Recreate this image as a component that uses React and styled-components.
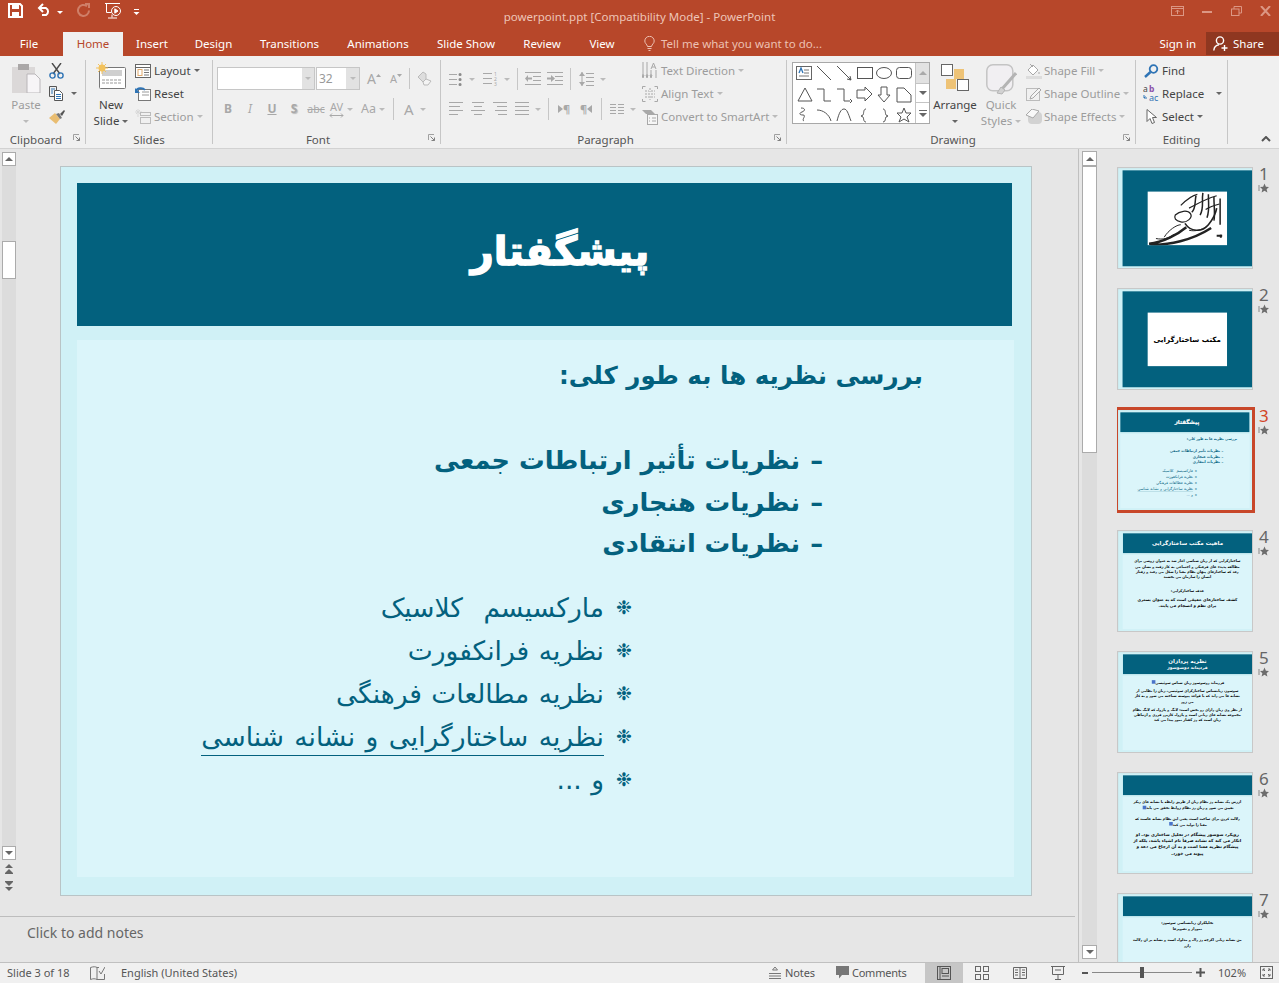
import React from "react";
import styled, { createGlobalStyle } from "styled-components";

const Global = createGlobalStyle`
  html, body { margin: 0; padding: 0; background: #e6e6e6; }
  * { box-sizing: border-box; }
  #root { width: 1279px; height: 983px; overflow: hidden; }
`;
const UI = `"Noto Sans", "Open Sans", sans-serif`;
const FA = `"DejaVu Sans", sans-serif`;
const GR = "#a8a8a8";
const DK = "#5f5f5f";

const Page = styled.div`
  width: 1279px; height: 983px; display: flex; flex-direction: column;
  font-family: ${UI}; font-size: 11.5px; color: #444; overflow: hidden;
`;
const TitleBar = styled.header`
  height: 32px; background: #b7472a; display: grid; grid-template-columns: 1fr auto 1fr; padding-bottom: 4px;
`;
const Qat = styled.div`display: flex; align-items: flex-start; padding: 3px 0 0 8px;`;
const QatItem = styled.span`display: flex; width: ${p => p.$w}px; height: 18px; align-items: ${p => p.$mid ? "center" : "flex-start"};`;
const DocTitle = styled.div`color: #eec5b8; font-size: 11.5px; line-height: 34px; height: 28px;`;
const WinCtl = styled.div`display: flex; justify-content: flex-end; padding: 6px 8px 0 0; gap: 18px;`;
const TabBar = styled.nav`
  height: 24px; background: #b7472a; display: flex; align-items: stretch;
`;
const Tab = styled.div`
  width: ${p => p.$w}px; margin-right: ${p => p.$mr || 0}px; text-align: center; line-height: 23px;
  color: ${p => p.$on ? "#b7472a" : "#fff"}; background: ${p => p.$on ? "#f0f0f0" : "transparent"};
`;
const TellMe = styled.div`display: flex; align-items: center; gap: 6px; margin-left: 15px; color: #edc1b3; padding-bottom: 1px;`;
const TabRight = styled.div`margin-left: auto; display: flex; align-items: stretch;`;
const SignIn = styled.div`color: #fff; line-height: 23px; margin-right: 10px;`;
const Share = styled.div`
  width: 73px; height: 23px; background: #8f3720; color: #fff; display: flex; align-items: center; gap: 5px; padding-left: 7px;
`;
const Ribbon = styled.section`
  height: 93px; background: #f0f0f0; border-bottom: 1px solid #d2d2d2; display: flex; padding-top: 4px; align-items: flex-start;
`;
const Group = styled.div`
  width: ${p => p.$w}px; height: 84px; border-right: 1px solid #c6c6c6; display: flex; flex-direction: column;
`;
const GroupBody = styled.div`
  height: 70px; display: flex; align-items: flex-start; padding-left: ${p => p.$pl || 0}px;
`;
const GroupLabel = styled.div`
  height: 14px; line-height: 20px; text-align: center; color: #555; position: relative; font-size: 11.5px;
  padding-right: ${p => p.$pr || 0}px;
`;
const Launcher = styled.span`position: absolute; right: 5px; top: 4px; display: flex;`;
const BigCol = styled.div`
  width: ${p => p.$w}px; display: flex; flex-direction: column; align-items: center; color: ${p => p.$off ? "#9c9c9c" : "#444"};
  margin-left: ${p => p.$ml || 0}px;
`;
const BigIcon = styled.div`height: ${p => p.$h}px; margin-top: ${p => p.$mt || 0}px; margin-bottom: ${p => p.$mb || 0}px; display: flex;`;
const BigLine = styled.div`height: 16px; line-height: 16px; display: flex; align-items: center; gap: 3px;`;
const SmallCol = styled.div`display: flex; flex-direction: column; margin-left: ${p => p.$ml || 0}px; margin-top: -1px;`;
const SmallRow = styled.div`
  height: 23px; display: flex; align-items: center; gap: ${p => p.$gap ?? 3}px; color: ${p => p.$off ? "#9c9c9c" : "#444"}; white-space: nowrap;
`;
const IconSlot = styled.span`width: ${p => p.$w}px; height: 16px; display: flex; align-items: center; justify-content: center; flex: none;`;
const Caret = styled.span`
  display: inline-block; width: 0; height: 0; flex: none; margin-left: ${p => p.$ml || 0}px;
  border-left: 3px solid transparent; border-right: 3px solid transparent;
  border-top: 3px solid ${p => p.$c || "#666"};
`;
const Stack = styled.div`display: flex; flex-direction: column;`;
const ToolRow = styled.div`
  display: flex; align-items: center; height: ${p => p.$h || 22}px; margin-top: ${p => p.$mt || 0}px; padding-left: ${p => p.$pl || 0}px;
`;
const Tool = styled.span`
  width: ${p => p.$w}px; display: flex; align-items: center; gap: ${p => p.$gap ?? 6}px; flex: none;
  justify-content: ${p => p.$center ? "center" : "flex-start"}; color: ${GR}; margin-left: ${p => p.$ml || 0}px;
`;
const Letter = styled.span`
  font-weight: ${p => p.$b ? 700 : 400}; font-style: ${p => p.$i ? "italic" : "normal"};
  text-decoration: ${p => p.$u ? "underline" : p.$s ? "line-through" : "none"};
  font-size: ${p => p.$fs || 12}px; color: ${GR}; line-height: ${p => p.$lh || 16}px;
  text-shadow: ${p => p.$sh ? "1px 1px 1px #bbb" : "none"};
`;
const KernStack = styled.span`display: flex; flex-direction: column; align-items: center; width: 15px;`;
const VSep = styled.span`
  width: 1px; height: ${p => p.$h || 22}px; background: #c6c6c6; flex: none; margin: 0 ${p => p.$mr ?? 7}px 0 ${p => p.$ml || 0}px;
`;
const InputBox = styled.span`
  width: ${p => p.$w}px; height: 23px; background: #fff; border: 1px solid #c6c6c6; border-right: 0; color: #999;
  line-height: 21px; padding-left: 2px; font-size: 12px; flex: none;
`;
const DropBox = styled.span`
  width: ${p => p.$w}px; height: 23px; background: #e2e2e2; border: 1px solid #c6c6c6; border-left: 0; display: flex;
  align-items: center; justify-content: center; margin-right: ${p => p.$mr || 0}px; flex: none;
`;
const Gallery = styled.div`
  margin-top: 2px; width: 138px; height: 62px; border: 1px solid #a8a8a8; display: flex; background: #fff;
`;
const GalleryScroll = styled.div`width: 15px; border-left: 1px solid #c4c4c4; display: flex; flex-direction: column;`;
const GalleryBtn = styled.span`
  height: ${p => p.$h}px; background: ${p => p.$off ? "#e2e2e2" : "#fff"}; border-bottom: ${p => p.$last ? 0 : 1}px solid #c4c4c4;
  display: flex; align-items: center; justify-content: center;
`;
const Collapse = styled.div`margin-left: auto; margin-top: 76px; padding-right: 8px; display: flex;`;

const Main = styled.main`height: 813px; display: flex; background: #e6e6e6;`;
const EditorCol = styled.div`width: 1079px; border-right: 1px solid #c0c0c0; display: flex; flex-direction: column;`;
const EditorTop = styled.div`height: 767px; display: flex;`;
const LeftBar = styled.div`width: 17px; padding: 3px 0 0 2px; display: flex; flex-direction: column;`;
const ScrollBtn = styled.span`
  width: ${p => p.$w}px; height: ${p => p.$h || 14}px; background: #fff; border: 1px solid #ababab; display: flex; align-items: center; justify-content: center; flex: none;
`;
const Track = styled.div`
  height: ${p => p.$h}px; width: ${p => p.$w}px; background: #dcdcdc; flex: none; padding-top: ${p => p.$pt || 0}px; display: flex; flex-direction: column;
`;
const TrackThumb = styled.div`height: ${p => p.$h}px; width: 100%; background: #fff; border: 1px solid #ababab;`;
const PagerIcon = styled.span`display: flex; justify-content: center; width: 14px; margin-top: ${p => p.$mt}px;`;
const Canvas = styled.div`flex: 1; padding: 17px 0 0 43px;`;
const Notes = styled.div`
  height: 46px; border-top: 1px solid #bdbdbd; margin-right: 3px; padding-left: 27px; font-size: 14px; color: #666; line-height: 32px;
`;
const SlideBox = styled.div`
  width: 972px; height: 730px; background: #d0f1f6; border: 1px solid #b9c4c6; padding: 16px 0 0 16px; flex: none;
  transform-origin: 0 0; transform: ${p => p.$scale ? `scale(${p.$scale})` : "none"};
  font-family: ${FA};
`;
const Banner = styled.div`
  width: ${p => p.$w || 935}px; height: ${p => p.$h || 143}px; background: #03617e; color: #fff; display: flex; flex-direction: column;
  align-items: center; justify-content: center; font-weight: 700; font-size: ${p => p.$fs || 42}px; line-height: 1.2;
`;
const MainTitle = styled.div`
  font-size: 40px; font-weight: 700; -webkit-text-stroke: 1.4px #fff; padding: 0 0 8px 31px;
`;
const SubTitle = styled.div`font-size: 32px;`;
const SlideBody = styled.div`
  width: 937px; height: 537px; margin-top: 14px; background: #dbf5fa; color: #03617e; padding-top: 15px; display: flex; flex-direction: column;
`;
const HeadLine = styled.div`
  height: 42px; line-height: 42px; padding-right: 91px; font-weight: 700; font-size: 24.5px; white-space: nowrap;
`;
const SubList = styled.div`margin-top: 43px; display: flex; flex-direction: column;`;
const SubItem = styled.div`
  height: 41.5px; line-height: 41.5px; padding-right: 191px; font-weight: 700; font-size: 25.6px; display: flex; white-space: nowrap;
`;
const Dash = styled.span`width: 23px; flex: none;`;
const BulletList = styled.div`margin-top: 21px; display: flex; flex-direction: column;`;
const BulletItem = styled.div`
  height: 43px; line-height: 43px; padding-right: 382px; font-size: 26.5px; display: flex; white-space: nowrap;
  word-spacing: ${p => p.$ws ?? 1}px;
`;
const BulletMark = styled.span`width: 28px; flex: none; font-size: 19px;`;
const Linked = styled.span`
  display: inline-block; height: 41px; border-bottom: ${p => p.$u ? "1px solid #03617e" : 0};
`;
const CenterWhite = styled.div`
  width: 575px; height: 388px; background: #fff; display: flex; align-items: center; justify-content: center; color: #000; font-size: 52px;
`;
const ThumbText = styled.div`
  padding: ${p => p.$pt ?? 12}px 70px 0; text-align: center; color: #000; font-size: ${p => p.$fs || 25}px; font-weight: 700; line-height: ${p => p.$lh || 38}px;
`;
const ThumbMark = styled.span`display: inline-block; width: 26px; height: 26px; background: #4a74c9; margin-left: 10px;`;

const ThumbPane = styled.aside`flex: 1; display: flex; overflow: hidden;`;
const RightBar = styled.div`
  width: 15px; margin-left: 3px; padding-top: 2px; display: flex; flex-direction: column; flex: none;
`;
const ThumbList = styled.div`
  margin-left: 20px; padding-top: 18px; display: flex; flex-direction: column; gap: 19px; height: 813px; overflow: hidden;
`;
const ThumbRow = styled.div`display: flex; gap: 6px; height: 102px; flex: none;`;
const ThumbFrame = styled.div`
  width: 136px; height: 102px; background: #fff; overflow: hidden; flex: none;
  border: 1px solid ${p => p.$sel ? "#c8472a" : "#c8c8c8"};
  box-shadow: ${p => p.$sel ? "0 0 0 2px #c8472a" : "none"};
`;
const ThumbSide = styled.div`display: flex; flex-direction: column; align-items: flex-start; width: 14px;`;
const ThumbNum = styled.div`font-size: 17px; line-height: 13px; color: ${p => p.$sel ? "#d24726" : "#666"};`;
const ThumbStar = styled.span`display: flex; margin-top: 3px; margin-left: -1px;`;

const StatusBar = styled.footer`
  height: 21px; background: #f0f0f0; border-top: 1px solid #c0c0c0; display: flex; align-items: center; font-size: 11px; color: #555; padding-bottom: 1px;
`;
const StatusItem = styled.span`
  margin-left: ${p => p.$ml || 0}px; display: flex; align-items: center; gap: ${p => p.$gap || 5}px; white-space: nowrap; flex: none;
  width: ${p => p.$w ? p.$w + "px" : "auto"}; letter-spacing: ${p => p.$ls || 0}px;
`;
const ViewBtn = styled.span`
  width: 38px; height: 20px; display: flex; align-items: center; justify-content: center; flex: none; background: ${p => p.$on ? "#c6c6c6" : "transparent"};
`;
const ZoomTrack = styled.span`
  width: 100px; height: 1px; background: #888; margin: 0 4px; flex: none; display: flex; justify-content: center; align-items: center;
`;
const ZoomKnob = styled.span`width: 4px; height: 11px; background: #555; flex: none;`;

const S = ({ w, h, vb, children, fill = "none", stroke = "none", sw = 1 }) => (
  <svg width={w} height={h} viewBox={vb || `0 0 ${w} ${h}`} fill={fill} stroke={stroke} strokeWidth={sw} style={{ display: "block", flex: "none" }}>{children}</svg>
);

const Star = () => (
  <S w={11} h={11}><path d="M6.5 .5l1.4 3.3 3.1.2-2.4 2.2.8 3.3-2.9-1.8-2.9 1.8.8-3.3L2 4l3.1-.2z" fill="#6d6d6d" /><path d="M0 3h2M0 5h2M0 7h2" stroke="#888" /></S>
);

const Save = () => (
  <S w={15} h={15}><path d="M1 1h11l2 2v11H1z" stroke="#fff" strokeWidth="2" /><rect x="4" y="1" width="7" height="5" fill="#fff" /><rect x="4" y="9" width="7" height="5" fill="#fff" /></S>
);
const Undo = () => (
  <S w={14} h={13} stroke="#fff" sw={2}><path d="M3 5h6a4 4 0 0 1 0 7H5" /><path d="M6 1L2 5l4 4" /></S>
);
const Redo = () => (
  <S w={14} h={14} stroke="#cf7f68" sw={2}><path d="M10 3.2a5.5 5.5 0 1 0 2 4.3" /><path d="M8 1h4v4" /></S>
);
const Present = () => (
  <S w={17} h={16} stroke="#fff" sw={1}><path d="M0 .5h15M1.5 .5v9h5" /><circle cx="11" cy="8" r="4.5" /><path d="M9.8 5.8l3.2 2.2-3.2 2.2z" fill="#fff" /><path d="M7 11.5v3M3 15h9" /></S>
);
const Customize = () => (
  <S w={7} h={7}><path d="M1 .5h5" stroke="#fff" /><path d="M.5 3h6l-3 3z" fill="#fff" /></S>
);
const RibbonOpts = () => (
  <S w={13} h={10} stroke="#dc9784"><rect x=".5" y=".5" width="12" height="9" /><path d="M.5 2.5h12" /><path d="M6.5 8V4M4.5 6l2-2 2 2" /></S>
);
const Minimize = () => <S w={11} h={10}><rect y="5" width="10" height="2" fill="#dc9784" /></S>;
const Restore = () => (
  <S w={11} h={10} stroke="#dc9784"><rect x=".5" y="3" width="7.5" height="6.5" /><path d="M3 3V.5h7.5V7H8" /></S>
);
const Close = () => <S w={11} h={10} stroke="#dc9784" sw={2}><path d="M1 0l9 10M10 0L1 10" /></S>;
const Bulb = () => (
  <S w={11} h={15} stroke="#edc1b3"><path d="M3.5 10.5C3 8 .8 7.5.8 5a4.7 4.7 0 0 1 9.4 0c0 2.5-2.2 3-2.7 5.5z" /><path d="M3.5 12.5h4M4.5 14.5h2" /></S>
);
const UserAdd = () => (
  <S w={15} h={15} stroke="#fff" sw={1.4}><circle cx="7" cy="4.5" r="3.6" /><path d="M.8 14.5c.3-3.3 2.6-5.5 5.2-5.8M11.5 9v6M8.5 12h6" /></S>
);
const Paste = () => (
  <S w={30} h={30}><rect x="1" y="4" width="23" height="26" fill="#dbd8d8" /><rect x="7" y="1" width="11" height="6" fill="#aaa7a7" /><path d="M16 11h8l5 5v14H16z" fill="#f7f5f7" stroke="#b9b6b9" /></S>
);
const Cut = () => (
  <S w={15} h={16}><path d="M3 0l8 11M12 0L4 11" stroke="#4a4a4a" strokeWidth="1.4" /><circle cx="3.5" cy="12.5" r="2.6" stroke="#2f74b5" strokeWidth="1.4" /><circle cx="11.5" cy="12.5" r="2.6" stroke="#2f74b5" strokeWidth="1.4" /></S>
);
const Copy = () => (
  <S w={15} h={15} stroke="#555"><path d="M.5.5h7v10h-7z" /><path d="M5.5 4.5h5l3 3v7h-8z" fill="#fff" /><path d="M7 8.5h5M7 10.5h5M7 12.5h5M2 3h4M2 5h2M2 7h2" stroke="#2f74b5" /></S>
);
const Painter = () => (
  <S w={16} h={14}><path d="M0 8l6-5 5 6-4 5z" fill="#e9bd71" /><path d="M7 4l4 5 2-1-3-5z" fill="#777" /><path d="M11 4l4-4 1 1-3 5z" fill="#555" /></S>
);
const NewSlide = () => (
  <S w={30} h={28}><rect x="3.5" y="5.5" width="26" height="21" rx="1" fill="#fff" stroke="#777" /><rect x="6" y="8" width="20" height="6" fill="#cfcfcf" /><path d="M6 18h20M6 21h20" stroke="#999" strokeDasharray="3 1" /><circle cx="6" cy="6" r="3.5" fill="#f3c25c" /><path d="M6 0v12M0 6h12M2 2l8 8M10 2l-8 8" stroke="#f3c25c" /></S>
);
const Layout = () => (
  <S w={16} h={14} stroke="#666"><rect x=".5" y=".5" width="15" height="13" fill="#fff" /><path d="M.5 3.5h15" /><rect x="3" y="5.5" width="4" height="6" stroke="#e0a96d" /><path d="M9 6h5M9 8.5h5M9 11h5" stroke="#777" /></S>
);
const Reset = () => (
  <S w={16} h={15}><rect x="3.5" y="3.5" width="12" height="11" fill="#fff" stroke="#777" /><path d="M7 6h7M7 9h7" stroke="#999" /><path d="M1 5a5 4 0 0 1 9-1" stroke="#2f74b5" strokeWidth="2" /><path d="M0 2v5h5z" fill="#2f74b5" /></S>
);
const Section = () => (
  <S w={16} h={15}><path d="M3 0v8M0 3h7M1 1l4 4M5 1L1 5" stroke="#d8d8d8" /><rect x="5.5" y="3.5" width="10" height="3" stroke="#bbb" /><rect x="5.5" y="8.5" width="10" height="6" stroke="#bbb" /></S>
);
const TriUp = () => <S w={5} h={10}><path d="M0 3h5L2.5 0z" fill={GR} /></S>;
const TriDown = () => <S w={5} h={10}><path d="M0 0h5L2.5 3z" fill={GR} /></S>;
const Eraser = () => (
  <S w={15} h={15}><path d="M1 6l5-5 3 2v5l-3 3z" fill="#ddd" stroke="#bbb" /><path d="M6 11l3-3 5 2-3 4H7z" fill="#f4f4f4" stroke="#bbb" /></S>
);
const KernArrow = () => <S w={15} h={5}><path d="M1 2.5h13M3 .5l-2 2 2 2M12 .5l2 2-2 2" stroke={GR} /></S>;
const Lines = ({ rows = 4, w = 14, dx = [], gap = 4, c = GR }) => (
  <S w={w} h={(rows - 1) * gap + 2} stroke={c}>{Array.from({ length: rows }).map((_, i) => <path key={i} d={`M${dx[i] || 0} ${i * gap + .5}H${w - ((dx[i + rows] || 0))}`} />)}</S>
);
const Bullets = () => (
  <S w={14} h={15}><path d="M0 2.5h8M0 7.5h8M0 12.5h8" stroke={GR} /><path d="M11 2.5h.1M11 7.5h.1M11 12.5h.1" stroke={DK} strokeWidth="3" strokeLinecap="round" opacity=".7" /></S>
);
const Numbers = () => (
  <S w={15} h={19}><path d="M0 3.5h9M0 8.5h9M0 13.5h9" stroke={GR} /><text x="11" y="6" fontSize="5" fontFamily="Noto Sans" fill={GR}>1</text><text x="11" y="11" fontSize="5" fontFamily="Noto Sans" fill={GR}>2</text><text x="11" y="16" fontSize="5" fontFamily="Noto Sans" fill={GR}>3</text></S>
);
const Indent = ({ inc }) => (
  <S w={16} h={14}><path d="M0 .5h16M8 4.5h8M8 8.5h8M0 12.5h16" stroke={GR} /><path d={inc ? "M0 6.5h4" : "M2 6.5h5"} stroke={GR} strokeWidth="2" /><path d={inc ? "M4 3l4 3.5-4 3.5z" : "M3 3L0 6.5 3 10z"} fill={GR} /></S>
);
const LineSpacing = () => (
  <S w={15} h={16}><path d="M7 2.5h8M7 6.5h8M7 10.5h8M7 14.5h8" stroke={GR} /><path d="M3 1v14" stroke={GR} /><path d="M0 5l3-4 3 4zM0 11l3 4 3-4z" fill={GR} /></S>
);
const ParaMark = styled.span`display: flex; align-items: center; gap: 0; font-weight: 700; font-size: 11px; line-height: 14px; color: ${GR};`;
const Para = ({ rev }) => (
  <ParaMark>
    {!rev && <S w={5} h={10}><path d="M0 1l5 4-5 4z" fill={GR} /></S>}
    ¶
    {rev && <S w={5} h={10}><path d="M5 1L0 5l5 4z" fill={GR} /></S>}
  </ParaMark>
);
const Columns = () => (
  <S w={14} h={11} stroke={GR}><path d="M0 .5h6M8 .5h6M0 3.5h6M8 3.5h6M0 6.5h6M8 6.5h6M0 9.5h6M8 9.5h6" /></S>
);
const TextDir = () => (
  <S w={16} h={17} stroke={GR}><path d="M1 0v14M5 0v14M9 8v6" /><path d="M0 13l1 3 1-3zM4 13l1 3 1-3zM8 13l1 3 1-3zM14 8l0 8" /><path d="M9 7l2.5-6L14 7M10 5h3" /></S>
);
const AlignText = () => (
  <S w={16} h={16} stroke={GR}><path d="M.5 3V.5h3M12.5.5h3V3M.5 13v2.5h3M12.5 15.5h3V13" /><path d="M3 5h4M9 5h4M3 8h10M3 11h4M9 11h4M8 2v4M8 10v4" strokeDasharray="2 1" /></S>
);
const Smart = () => (
  <S w={16} h={16}><path d="M0 1h9l4 4H4z" fill={GR} /><rect x="5.5" y="5.5" width="10" height="10" fill="#f6f6f6" stroke={GR} /><path d="M7 9h1M10 9h4M7 12h1M10 12h4" stroke={GR} /></S>
);
const Arrange = () => (
  <S w={28} h={27}><rect x="13" y="5" width="10" height="10" fill="#eec377" /><rect x="5" y="15" width="10" height="10" fill="#eec377" /><rect x=".5" y=".5" width="11" height="11" fill="#fff" stroke="#666" /><rect x="16.5" y="15.5" width="11" height="11" fill="#fff" stroke="#666" /></S>
);
const Quick = () => (
  <S w={31} h={31}><rect x=".8" y=".8" width="26" height="26" rx="6" fill="#f1eff2" stroke="#c4c4c4" strokeWidth="1.5" /><path d="M30 9L16 25" stroke="#b4b4b4" strokeWidth="3" /><path d="M15 23l4 3-3 4-5-1z" fill="#d2d2d2" stroke="#b4b4b4" /></S>
);
const ShapeFill = () => (
  <S w={16} h={16}><path d="M2 7l5-5 5 5-5 5z" fill="#fff" stroke={GR} /><path d="M4 1l3 3M13 9v2" stroke={GR} /><rect y="13" width="16" height="3" fill="#ddd" /></S>
);
const ShapeOutline = () => (
  <S w={16} h={15}><rect x=".5" y="2.5" width="13" height="12" stroke="#bbb" /><path d="M5 10l8-8 2 2-8 8-3 1z" fill="#f4f4f4" stroke={GR} /></S>
);
const ShapeEffects = () => (
  <S w={16} h={15}><rect x="2" y="3" width="14" height="12" rx="4" fill="#d2d2d2" /><path d="M0 6L6 0l7 2-6 7z" fill="#f8f8f8" stroke={GR} /></S>
);
const Find = () => (
  <S w={15} h={14}><circle cx="9.5" cy="5" r="3.8" stroke="#2f74b5" strokeWidth="1.8" /><path d="M6.5 8L1 13" stroke="#2f74b5" strokeWidth="2.4" /></S>
);
const Replace = () => (
  <S w={17} h={21}><text x="0" y="9" fontFamily="Noto Sans" fontSize="8.5" fill="#444">a</text><text x="6" y="9" fontFamily="Noto Sans" fontWeight="700" fontSize="8.5" fill="#8a4ea8">b</text><text x="6" y="17.5" fontFamily="Noto Sans" fontSize="9" fill="#2f74b5">ac</text><path d="M1 12v3h3M2.5 13.5L1 15" stroke="#2f74b5" /></S>
);
const Pointer = () => (
  <S w={11} h={16}><path d="M1 .5v12l3-3 2 5 2.5-1-2-5h4z" fill="#fff" stroke="#666" /></S>
);
const LauncherIcon = () => (
  <S w={7} h={7}><path d="M.5 6V.5H6" stroke="#a0a0a0" /><path d="M2.5 2.5l4 4M6.5 3.5v3h-3" stroke="#808080" /></S>
);
const Chevron = () => <S w={10} h={6} stroke="#555" sw={2}><path d="M1 5l4-4 4 4" /></S>;
const Up = ({ c = "#666" }) => <S w={8} h={4}><path d="M0 4h8L4 0z" fill={c} /></S>;
const Down = ({ c = "#666" }) => <S w={8} h={4}><path d="M0 0h8L4 4z" fill={c} /></S>;
const PrevSlide = () => <S w={8} h={10}><path d="M4 0l4 4H0zM4 5l4 4H0z" fill="#666" /><path d="M0 9.5h8" stroke="#666" /></S>;
const NextSlide = () => <S w={8} h={10}><path d="M0 .5h8" stroke="#666" /><path d="M4 5L0 1h8zM4 10L0 6h8z" fill="#666" /></S>;

const GalleryShapes = () => (
  <S w={122} h={60} stroke="#555">
    <rect x="3.5" y="3.5" width="15" height="13" fill="#fff" stroke="#666" />
    <path d="M6 10l2-5 2 5" stroke="#2f74b5" strokeWidth="1.3" />
    <path d="M11 7h5M11 10h5M6 13h10" stroke="#777" />
    <path d="M24 3l14 14M44 3l14 14M58 17l-4-1M58 17l-1-4" />
    <rect x="64.5" y="4.5" width="15" height="11" />
    <ellipse cx="91" cy="10" rx="7.5" ry="5.5" />
    <rect x="103.5" y="4.5" width="15" height="11" rx="3" />
    <path d="M5 38l7-13 7 13zM24 26h7v12h7M44 26h7v12h6M57 36l2 2-2 2" />
    <path d="M64 27h8v-3l7 7-7 7v-3h-8z" />
    <path d="M88 24h6v8h3l-6 7-6-7h3z" />
    <path d="M104 25h7l7 7v7h-14z" />
    <path d="M8 45c5 0 4 3 1 4s-3 3 1 3-2 5 1 6" />
    <path d="M24 47c6 0 12 4 14 11M44 58c2-8 4-12 7-12s4 4 7 12" />
    <path d="M73 46c-3 0-2 5-3 6l-2 1 2 1c1 1 0 5 3 5M90 46c3 0 2 5 3 6l2 1-2 1c-1 1 0 5-3 5" />
    <path d="M111 45l2 5h5l-4 4 2 5-5-3-5 3 2-5-4-4h5z" />
  </S>
);

const Calligraphy = () => (
  <svg width="575" height="388" viewBox="0 0 575 388" fill="none" stroke="#222">
    <path d="M10 378c100 -8 210 -70 270 -120M20 384c130 6 300 -30 440 -120" strokeWidth="18" />
    <path d="M270 230c40 60 120 70 170 10s60 -120 60 -120" strokeWidth="12" />
    <path d="M525 50v190M480 40c0 60 10 130 0 170M440 20c0 80 10 110 -10 170M400 10c-10 60 10 110 -20 160M350 30c-10 50 0 90 -30 120" strokeWidth="11" />
    <path d="M200 170c30-30 90-40 110-10s-30 70-70 60-50-30-40-50zM240 100c30-30 70-70 120-80M300 120c40-20 100-60 200-90M420 130c30-20 60-30 100-40" strokeWidth="9" />
    <path d="M500 320h40M530 310v24" strokeWidth="14" />
    <path d="M120 330c30 -50 90 -90 120 -90M60 340c50 10 90 0 130 -30M300 280c40 10 90 0 130 -30" strokeWidth="7" />
  </svg>
);

const Bell = () => (
  <S w={12} h={12} stroke="#777"><path d="M6 0l2.5 3h-5zM0 6.5h12M0 9h12M0 11.5h12" /></S>
);
const Comment = () => (
  <S w={13} h={13}><path d="M0 0h13v9H6l-3 3.5V9H0z" fill="#777" /></S>
);
const Book = () => (
  <S w={15} h={14} stroke="#777"><path d="M.5 1.5c3-1 5-1 6.5 0v12c-2-1-4-1-6.5 0zM7 1.5h2M7 13.5h7.5V8M9 5l2 3 4-7" /></S>
);
const ViewNormal = () => (
  <S w={14} h={14} stroke="#555"><rect x=".5" y=".5" width="13" height="13" /><rect x="5" y="2.5" width="6.5" height="5" /><path d="M3 1v12M5 10h7" /></S>
);
const ViewSorter = () => (
  <S w={14} h={14} stroke="#666"><rect x=".5" y=".5" width="5" height="5" /><rect x="8.5" y=".5" width="5" height="5" /><rect x=".5" y="8.5" width="5" height="5" /><rect x="8.5" y="8.5" width="5" height="5" /></S>
);
const ViewReading = () => (
  <S w={14} h={14} stroke="#666"><path d="M.5 1.5h13v11h-13zM7 1.5v11M2 4h3M2 6.5h3M2 9h3M9 4h3M9 6.5h3M9 9h3" /></S>
);
const ViewShow = () => (
  <S w={14} h={14} stroke="#666"><path d="M0 .5h14M1.5 .5v8h11v-8M7 8.5v5M4 13.5h6M4 4h6" /></S>
);
const Fit = () => (
  <S w={13} h={13} stroke="#666"><rect x=".5" y=".5" width="12" height="12" /><path d="M3 3l2 2M3 3v2M3 3h2M10 3L8 5M10 3v2M10 3H8M3 10l2-2M3 10V8M3 10h2M10 10L8 8M10 10V8M10 10H8" /></S>
);
const GalleryMore = () => <S w={8} h={7}><path d="M0 .5h8" stroke="#666" /><path d="M0 3h8L4 7z" fill="#666" /></S>;

const Slide3 = ({ scale }) => (
  <SlideBox $scale={scale} dir="ltr">
    <Banner><MainTitle>پیشگفتار</MainTitle></Banner>
    <SlideBody dir="rtl">
      <HeadLine>بررسی نظریه ها به طور کلی:</HeadLine>
      <SubList>
        <SubItem><Dash>–</Dash>نظریات تأثیر ارتباطات جمعی</SubItem>
        <SubItem><Dash>–</Dash>نظریات هنجاری</SubItem>
        <SubItem><Dash>–</Dash>نظریات انتقادی</SubItem>
      </SubList>
      <BulletList>
        <BulletItem $ws={12}><BulletMark>❉</BulletMark><span>مارکسیسم کلاسیک</span></BulletItem>
        <BulletItem><BulletMark>❉</BulletMark><span>نظریه فرانکفورت</span></BulletItem>
        <BulletItem><BulletMark>❉</BulletMark><span>نظریه مطالعات فرهنگی</span></BulletItem>
        <BulletItem $ws={2}><BulletMark>❉</BulletMark><Linked $u>نظریه ساختارگرایی و نشانه شناسی</Linked></BulletItem>
        <BulletItem><BulletMark>❉</BulletMark><span>و ...</span></BulletItem>
      </BulletList>
    </SlideBody>
  </SlideBox>
);

const SCALE = 0.138;
const thumbs = [
  <SlideBox $scale={SCALE} key="1" dir="rtl"><Banner $w={938} $h={695}><CenterWhite><Calligraphy /></CenterWhite></Banner></SlideBox>,
  <SlideBox $scale={SCALE} key="2" dir="rtl"><Banner $w={938} $h={695}><CenterWhite>مکتب ساختارگرایی</CenterWhite></Banner></SlideBox>,
  <Slide3 key="3" scale={SCALE} />,
  <SlideBox $scale={SCALE} key="4" dir="rtl">
    <Banner $fs={40}>ماهیت مکتب ساختارگرایی</Banner>
    <SlideBody>
      <ThumbText>ساختارگرایی که از زبان شناسی آغاز شد به عنوان روشی برای مطالعه پدیده های فرهنگی و اجتماعی به کار رفت و نشان می دهد که ساختارهای پنهان نظام معنا را شکل می دهند و رفتار انسان را سازمان می بخشند</ThumbText>
      <ThumbText $pt={62}>هدف ساختارگرایی:</ThumbText>
      <ThumbText $pt={20} $lh={44} $fs={29}>کشف ساختارهای عمیقی است که به عنوان بستری برای نظم و انسجام می یابند.</ThumbText>
    </SlideBody>
  </SlideBox>,
  <SlideBox $scale={SCALE} key="5" dir="rtl">
    <Banner $fs={40}>نظریه پردازان<SubTitle>فردیناند دوسوسور</SubTitle></Banner>
    <SlideBody>
      <ThumbText $pt={14}>فردیناند دوسوسور زبان شناس سوئیسی<ThumbMark /></ThumbText>
      <ThumbText $pt={22}>سوسور، زبانشناس ساختارگرای سوئیسی، زبان را نظامی از نشانه ها می داند که با قواعد پیوسته شناخته می شود و به کار می رود</ThumbText>
      <ThumbText $pt={22}>از نظر وی زبان دارای دو بخش است: لانگ و پارول که لانگ نظام مجموعه نشانه های زبانی است و پارول کاربرد فردی و ارتباطی زبان است که در گفتار نمود پیدا می کند</ThumbText>
    </SlideBody>
  </SlideBox>,
  <SlideBox $scale={SCALE} key="6" dir="rtl">
    <Banner> </Banner>
    <SlideBody>
      <ThumbText $pt={0} $lh={44}>ارزش یک نشانه در نظام زبان از طریق رابطه با نشانه های دیگر تعیین می شود و زبان در نظام روابط تحقق می یابد<ThumbMark /></ThumbText>
      <ThumbText $pt={30} $lh={44}>دلالت کردن برای ساخت است، یعنی این نظام نشانه هاست که معنا را تولید می کند<ThumbMark /></ThumbText>
      <ThumbText $pt={26} $fs={31} $lh={46}>رویکرد سوسور پیشگام در تحلیل ساختاری بود. او انکار می کند که نشانه صرفاً نام اشیاء باشد، بلکه از پیشگام نظریه معنا است و به آن ارجاع می دهد و پیوند می خورد.</ThumbText>
    </SlideBody>
  </SlideBox>,
  <SlideBox $scale={SCALE} key="7" dir="rtl">
    <Banner> </Banner>
    <SlideBody>
      <ThumbText $pt={0} $lh={44}>تحلیلگران زبانشناسی سوسور:</ThumbText>
      <ThumbText $pt={0} $lh={44}>نمودار و تصویرها</ThumbText>
      <ThumbText $pt={34} $lh={44}>من نشانه زبانی اگرچه در دال و مدلول است و نشانه بر آن دلالت دارد</ThumbText>
    </SlideBody>
  </SlideBox>,
];

export default function App() {
  return (
    <Page>
      <Global />
      <TitleBar>
        <Qat>
          <QatItem $w={29}><Save /></QatItem>
          <QatItem $w={20}><Undo /></QatItem>
          <QatItem $w={20} $mid><Caret $c="#fff" /></QatItem>
          <QatItem $w={28}><Redo /></QatItem>
          <QatItem $w={28}><Present /></QatItem>
          <QatItem $w={10} $mid><Customize /></QatItem>
        </Qat>
        <DocTitle>powerpoint.ppt [Compatibility Mode] - PowerPoint</DocTitle>
        <WinCtl><RibbonOpts /><Minimize /><Restore /><Close /></WinCtl>
      </TitleBar>
      <TabBar>
        <Tab $w={58} $mr={5}>File</Tab>
        <Tab $w={60} $on>Home</Tab>
        <Tab $w={58}>Insert</Tab>
        <Tab $w={65}>Design</Tab>
        <Tab $w={87}>Transitions</Tab>
        <Tab $w={90}>Animations</Tab>
        <Tab $w={86}>Slide Show</Tab>
        <Tab $w={66}>Review</Tab>
        <Tab $w={54}>View</Tab>
        <TellMe><Bulb />Tell me what you want to do...</TellMe>
        <TabRight>
          <SignIn>Sign in</SignIn>
          <Share><UserAdd />Share</Share>
        </TabRight>
      </TabBar>
      <Ribbon>
        <Group $w={86}>
          <GroupBody $pl={10}>
            <BigCol $w={32} $off>
              <BigIcon $h={30} $mt={3} $mb={4}><Paste /></BigIcon>
              <BigLine>Paste</BigLine>
              <BigLine><Caret $c="#bbb" /></BigLine>
            </BigCol>
            <SmallCol $ml={7}>
              <SmallRow><Cut /></SmallRow>
              <SmallRow $gap={5}><Copy /><IconSlot $w={10}><Caret /></IconSlot></SmallRow>
              <SmallRow><Painter /></SmallRow>
            </SmallCol>
          </GroupBody>
          <GroupLabel $pr={13}>Clipboard<Launcher><LauncherIcon /></Launcher></GroupLabel>
        </Group>
        <Group $w={127}>
          <GroupBody $pl={9}>
            <BigCol $w={32}>
              <BigIcon $h={28} $mt={2} $mb={7}><NewSlide /></BigIcon>
              <BigLine>New</BigLine>
              <BigLine>Slide<Caret /></BigLine>
            </BigCol>
            <SmallCol $ml={8}>
              <SmallRow><IconSlot $w={16}><Layout /></IconSlot>Layout<Caret /></SmallRow>
              <SmallRow><IconSlot $w={16}><Reset /></IconSlot>Reset</SmallRow>
              <SmallRow $off><IconSlot $w={16}><Section /></IconSlot>Section<Caret $c="#bbb" /></SmallRow>
            </SmallCol>
          </GroupBody>
          <GroupLabel>Slides</GroupLabel>
        </Group>
        <Group $w={228}>
          <GroupBody $pl={4}>
            <Stack>
              <ToolRow $h={23} $mt={7}>
                <InputBox $w={85} />
                <DropBox $w={13} $mr={1}><Caret $c="#bbb" /></DropBox>
                <InputBox $w={30}>32</InputBox>
                <DropBox $w={14} $mr={7}><Caret $c="#bbb" /></DropBox>
                <Tool $w={23} $gap={0}><Letter $fs={14}>A</Letter><TriUp /></Tool>
                <Tool $w={19} $gap={0}><Letter $fs={11}>A</Letter><TriDown /></Tool>
                <VSep $h={21} />
                <Tool $w={15}><Eraser /></Tool>
              </ToolRow>
              <ToolRow $mt={8}>
                <Tool $w={22} $center><Letter $b>B</Letter></Tool>
                <Tool $w={22} $center><Letter $i>I</Letter></Tool>
                <Tool $w={22} $center><Letter $u $b>U</Letter></Tool>
                <Tool $w={22} $center><Letter $b $sh>S</Letter></Tool>
                <Tool $w={22} $center><Letter $s $fs={10.5}>abc</Letter></Tool>
                <Tool $w={32} $gap={3} $ml={2}><KernStack><Letter $fs={11} $lh={12}>AV</Letter><KernArrow /></KernStack><Caret $c="#bbb" /></Tool>
                <Tool $w={29} $gap={3}><Letter $fs={12.5}>Aa</Letter><Caret $c="#bbb" /></Tool>
                <VSep $h={22} $ml={3} $mr={10} />
                <Tool $w={30} $gap={6}><Letter $fs={15}>A</Letter><Caret $c="#bbb" /></Tool>
              </ToolRow>
            </Stack>
          </GroupBody>
          <GroupLabel $pr={17}>Font<Launcher><LauncherIcon /></Launcher></GroupLabel>
        </Group>
        <Group $w={346}>
          <GroupBody $pl={8}>
            <Stack>
              <ToolRow $h={22} $mt={8}>
                <Tool $w={34}><Bullets /><Caret $c="#bbb" /></Tool>
                <Tool $w={34}><Numbers /><Caret $c="#bbb" /></Tool>
                <VSep />
                <Tool $w={22}><Indent /></Tool>
                <Tool $w={23}><Indent inc /></Tool>
                <VSep $mr={8} />
                <Tool $w={30}><LineSpacing /><Caret $c="#bbb" /></Tool>
              </ToolRow>
              <ToolRow $mt={8}>
                <Tool $w={22}><Lines w={14} dx={[0, 0, 0, 0, 0, 3, 0, 5]} gap={4} /></Tool>
                <Tool $w={22}><Lines w={14} dx={[1, 3, 0, 3, 1, 3, 0, 3]} gap={4} /></Tool>
                <Tool $w={22}><Lines w={14} dx={[0, 4, 2, 5]} gap={4} /></Tool>
                <Tool $w={33}><Lines w={14} gap={4} /><Caret $c="#bbb" /></Tool>
                <VSep $mr={9} />
                <Tool $w={22}><Para /></Tool>
                <Tool $w={21}><Para rev /></Tool>
                <VSep $mr={8} />
                <Tool $w={30}><Columns /><Caret $c="#bbb" /></Tool>
              </ToolRow>
            </Stack>
            <SmallCol $ml={2}>
              <SmallRow $off $gap={3}><IconSlot $w={16}><TextDir /></IconSlot>Text Direction<Caret $c="#bbb" /></SmallRow>
              <SmallRow $off $gap={3}><IconSlot $w={16}><AlignText /></IconSlot>Align Text<Caret $c="#bbb" /></SmallRow>
              <SmallRow $off $gap={3}><IconSlot $w={16}><Smart /></IconSlot>Convert to SmartArt<Caret $c="#bbb" /></SmallRow>
            </SmallCol>
          </GroupBody>
          <GroupLabel $pr={16}>Paragraph<Launcher><LauncherIcon /></Launcher></GroupLabel>
        </Group>
        <Group $w={349}>
          <GroupBody $pl={5}>
            <Gallery>
              <GalleryShapes />
              <GalleryScroll>
                <GalleryBtn $h={21} $off><Up c="#aaa" /></GalleryBtn>
                <GalleryBtn $h={19}><Down /></GalleryBtn>
                <GalleryBtn $h={20} $last><GalleryMore /></GalleryBtn>
              </GalleryScroll>
            </Gallery>
            <BigCol $w={44} $ml={3}>
              <BigIcon $h={27} $mt={4} $mb={6}><Arrange /></BigIcon>
              <BigLine>Arrange</BigLine>
              <BigLine><Caret /></BigLine>
            </BigCol>
            <BigCol $w={46} $off $ml={1}>
              <BigIcon $h={31} $mt={4} $mb={2}><Quick /></BigIcon>
              <BigLine>Quick</BigLine>
              <BigLine>Styles<Caret $c="#bbb" /></BigLine>
            </BigCol>
            <SmallCol $ml={2}>
              <SmallRow $off><IconSlot $w={15}><ShapeFill /></IconSlot>Shape Fill<Caret $c="#bbb" /></SmallRow>
              <SmallRow $off><IconSlot $w={15}><ShapeOutline /></IconSlot>Shape Outline<Caret $c="#bbb" /></SmallRow>
              <SmallRow $off><IconSlot $w={15}><ShapeEffects /></IconSlot>Shape Effects<Caret $c="#bbb" /></SmallRow>
            </SmallCol>
          </GroupBody>
          <GroupLabel $pr={16}>Drawing<Launcher><LauncherIcon /></Launcher></GroupLabel>
        </Group>
        <Group $w={92}>
          <GroupBody $pl={7}>
            <SmallCol>
              <SmallRow><IconSlot $w={16}><Find /></IconSlot>Find</SmallRow>
              <SmallRow><IconSlot $w={16}><Replace /></IconSlot>Replace<Caret $ml={9} /></SmallRow>
              <SmallRow><IconSlot $w={16}><Pointer /></IconSlot>Select<Caret /></SmallRow>
            </SmallCol>
          </GroupBody>
          <GroupLabel>Editing</GroupLabel>
        </Group>
        <Collapse><Chevron /></Collapse>
      </Ribbon>
      <Main>
        <EditorCol>
          <EditorTop>
            <LeftBar>
              <ScrollBtn $w={14}><Up /></ScrollBtn>
              <Track $h={680} $w={14} $pt={75}><TrackThumb $h={38} /></Track>
              <ScrollBtn $w={14}><Down /></ScrollBtn>
              <PagerIcon $mt={4}><PrevSlide /></PagerIcon>
              <PagerIcon $mt={7}><NextSlide /></PagerIcon>
            </LeftBar>
            <Canvas><Slide3 /></Canvas>
          </EditorTop>
          <Notes>Click to add notes</Notes>
        </EditorCol>
        <ThumbPane>
          <RightBar>
            <ScrollBtn $w={15} $h={15}><Up /></ScrollBtn>
            <Track $h={779} $w={15}><TrackThumb $h={287} /></Track>
            <ScrollBtn $w={15} $h={14}><Down /></ScrollBtn>
          </RightBar>
          <ThumbList>
            {thumbs.map((t, i) => (
              <ThumbRow key={i}>
                <ThumbFrame $sel={i === 2}>{t}</ThumbFrame>
                <ThumbSide>
                  <ThumbNum $sel={i === 2}>{i + 1}</ThumbNum>
                  <ThumbStar><Star /></ThumbStar>
                </ThumbSide>
              </ThumbRow>
            ))}
          </ThumbList>
        </ThumbPane>
      </Main>
      <StatusBar>
        <StatusItem $ml={7} $w={83}>Slide 3 of 18</StatusItem>
        <StatusItem $w={31}><Book /></StatusItem>
        <StatusItem $w={648}>English (United States)</StatusItem>
        <StatusItem $w={67} $gap={4} $ls={-.1}><Bell />Notes</StatusItem>
        <StatusItem $w={89} $gap={3} $ls={-.25}><Comment />Comments</StatusItem>
        <ViewBtn $on><ViewNormal /></ViewBtn>
        <ViewBtn><ViewSorter /></ViewBtn>
        <ViewBtn><ViewReading /></ViewBtn>
        <ViewBtn><ViewShow /></ViewBtn>
        <StatusItem $ml={5}><S w={6} h={2}><rect width="6" height="2" fill="#555" /></S></StatusItem>
        <ZoomTrack><ZoomKnob /></ZoomTrack>
        <StatusItem><S w={9} h={9}><path d="M4.5 0v9M0 4.5h9" stroke="#555" strokeWidth="2" /></S></StatusItem>
        <StatusItem $ml={13} $w={42}>102%</StatusItem>
        <StatusItem><Fit /></StatusItem>
      </StatusBar>
    </Page>
  );
}
